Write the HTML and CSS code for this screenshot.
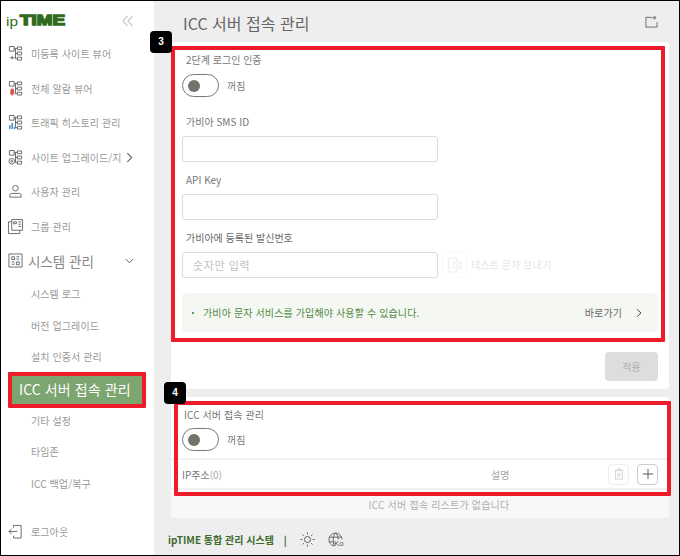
FILE: index.html
```html
<!DOCTYPE html>
<html lang="ko">
<head>
<meta charset="utf-8">
<title>ICC 서버 접속 관리</title>
<link rel="stylesheet" href="styles.css">
</head>
<body>
<div class="frame">
  <aside class="sidebar">
    <div class="logo-row">
      <svg class="logo" width="66" height="18" viewBox="0 0 66 18">
        <text class="logo-ip" x="5" y="15" textLength="12" lengthAdjust="spacingAndGlyphs">ip</text>
        <text class="logo-time" x="19" y="14" textLength="45" lengthAdjust="spacingAndGlyphs">TIME</text>
      </svg>
      <svg class="collapse" width="12" height="12" viewBox="0 0 12 12"><path d="M5.500 1 1 6l4.500 5M10.500 1 6 6l4.500 5"/></svg>
    </div>
    <nav class="nav">
      <a class="item">
        <svg class="ico" viewBox="0 0 16 16"><path d="M1.500.5h5v5h-5zM10 1h4.500v3H10zM10 6.500h4.500v3H10zM10 12h4.500v3H10zM6.500 2.500H10M8 2.500V13.500H10M8 8h2"/><path d="M2 12.500h5M4.500 10.500v4"/></svg>
        <span>미등록 사이트 뷰어</span>
      </a>
      <a class="item">
        <svg class="ico" viewBox="0 0 16 16"><path d="M1.500.5h5v5h-5zM10 1h4.500v3H10zM10 6.500h4.500v3H10zM10 12h4.500v3H10zM6.500 2.500H10M8 2.500V13.500H10M8 8h2"/><path class="alert" d="M2.500 13V10a2 2 0 0 1 4 0v3l1 1h-6zM3.500 14.500h2v1h-2z"/></svg>
        <span>전체 알람 뷰어</span>
      </a>
      <a class="item">
        <svg class="ico" viewBox="0 0 16 16"><path d="M1.500.5h5v5h-5zM10 1h4.500v3H10zM10 6.500h4.500v3H10zM10 12h4.500v3H10zM6.500 2.500H10M8 2.500V13.500H10M8 8h2"/><path class="bars" d="M2 11v4M4.500 8.500V15M7 12.500V15"/></svg>
        <span>트래픽 히스토리 관리</span>
      </a>
      <a class="item">
        <svg class="ico" viewBox="0 0 16 16"><path d="M1.500.5h5v5h-5zM10 1h4.500v3H10zM10 6.500h4.500v3H10zM10 12h4.500v3H10zM6.500 2.500H10M8 2.500V13.500H10M8 8h2"/><circle cx="4" cy="12" r="3"/><circle cx="4" cy="12" r="1"/></svg>
        <span class="long">사이트 업그레이드/지</span>
        <svg class="chev-r" viewBox="0 0 8 12"><path d="M1.500 1 6.500 6l-5 5"/></svg>
      </a>
      <a class="item">
        <svg class="ico" viewBox="0 0 16 16"><circle cx="8" cy="4.500" r="3"/><path d="M2 14v-2a2 2 0 0 1 2-2h8a2 2 0 0 1 2 2v2z"/></svg>
        <span>사용자 관리</span>
      </a>
      <a class="item">
        <svg class="ico" viewBox="0 0 16 16"><path d="M4 .5h11.500V12H4zM4 3H.5v12.500H12.500V12"/><path d="M6 3h3v2H6zM11 3h3M11 5.500h3M11 8h3"/></svg>
        <span>그룹 관리</span>
      </a>
      <a class="item group">
        <svg class="ico" viewBox="0 0 16 16"><path d="M1 1h14v14H1zM4 4h3v3H4zM9 4h3M9 6.500h3M4 9.500h3M4 12h3M9 9.500h3v3H9z"/></svg>
        <span>시스템 관리</span>
        <svg class="chev-d" viewBox="0 0 10 6"><path d="M1 1l4 4 4-4"/></svg>
      </a>
      <a class="sub">시스템 로그</a>
      <a class="sub">버전 업그레이드</a>
      <a class="sub">설치 인증서 관리</a>
      <a class="sub active">ICC 서버 접속 관리</a>
      <a class="sub">기타 설정</a>
      <a class="sub">타임존</a>
      <a class="sub">ICC 백업/복구</a>
    </nav>
    <a class="item logout">
      <svg class="ico" viewBox="0 0 16 16"><path d="M6 4V1.500h8V15H6v-2.500M10 8H1M4 5 1 8l3 3"/></svg>
      <span>로그아웃</span>
    </a>
  </aside>

  <main class="main">
    <header class="top">
      <h1>ICC 서버 접속 관리</h1>
      <svg class="share" viewBox="0 0 14 14"><path d="M7 2.500H1v10.500h12V7.500"/><path d="M7 3h4M9.500 1 12 3 9.500 5"/></svg>
    </header>

    <section class="card form-card">
      <label class="lbl">2단계 로그인 인증</label>
      <div class="switch-row">
        <span class="switch"><i></i></span>
        <span class="off">꺼짐</span>
      </div>
      <label class="lbl first">가비아 SMS ID</label>
      <div class="input"></div>
      <label class="lbl gap">API Key</label>
      <div class="input"></div>
      <label class="lbl gap dark">가비아에 등록된 발신번호</label>
      <div class="input-row">
        <div class="input ph">숫자만 입력</div>
        <span class="test-btn">
          <svg viewBox="0 0 16 18"><path d="M10 4V1H2v15h8v-3M7 5h8v7H7z"/><path d="M9 7.500h4M9 9.500h4"/></svg>
        </span>
        <span class="test-txt">테스트 문자 보내기</span>
      </div>
      <div class="notice">
        <span class="dot"></span>
        <span class="notice-txt">가비아 문자 서비스를 가입해야 사용할 수 있습니다.</span>
        <span class="go">바로가기</span>
        <svg class="chev-go" viewBox="0 0 8 12"><path d="M1.500 1 6.500 6l-5 5"/></svg>
      </div>
      <div class="actions"><span class="apply">적용</span></div>
    </section>

    <section class="card list-card">
      <div class="list-head">
        <div class="list-title">ICC 서버 접속 관리</div>
        <div class="switch-row tight">
          <span class="switch"><i></i></span>
          <span class="off">꺼짐</span>
        </div>
      </div>
      <div class="thead">
        <span class="th-ip">IP주소<em>(0)</em></span>
        <span class="th-desc">설명</span>
        <span class="sq faint">
          <svg viewBox="0 0 12 14"><path d="M1 3h10M4 3V1h4v2M2 3v10h8V3M5 5.500v5M7 5.500v5"/></svg>
        </span>
        <span class="sq">
          <svg viewBox="0 0 14 14"><path d="M7 1v12M1 7h12"/></svg>
        </span>
      </div>
      <div class="empty">ICC 서버 접속 리스트가 없습니다</div>
    </section>

    <footer class="foot">
      <strong>ipTIME 통합 관리 시스템</strong>
      <span class="bar">|</span>
      <svg class="sun" viewBox="0 0 16 16"><circle cx="8" cy="8" r="3.200"/><path d="M8 .5v2M8 13.500v2M.5 8h2M13.500 8h2M2.700 2.700l1.400 1.400M11.900 11.900l1.400 1.400M2.700 13.300l1.400-1.400M11.900 4.100l1.400-1.400"/></svg>
      <span class="globe">
        <svg viewBox="0 0 16 16"><path d="M6.500 15A7 7 0 1 1 15 8M1 5.500h13.500M1 10.500h4.500M8 1C5 4 5 11 6.800 15M8 1C10.500 3.500 11 6 11 8"/></svg>
        <b>Ko</b>
      </span>
    </footer>
  </main>

  <div class="mark mark-side"></div>
  <div class="mark mark-form"></div>
  <div class="mark mark-list"></div>
  <div class="badge badge-3">3</div>
  <div class="badge badge-4">4</div>
</div>
</body>
</html>
```
FILE: styles.css
```css
* { box-sizing: border-box; }
html, body { margin: 0; padding: 0; }
body { width: 680px; height: 556px; overflow: hidden; font-family: "Noto Sans CJK KR", "Noto Sans", sans-serif; color: #555; }

.frame { position: relative; width: 680px; height: 556px; border: 1px solid #000; display: flex; background: #eee; }

/* sidebar */
.sidebar { width: 153px; flex: none; background: #fff; display: flex; flex-direction: column; }
.logo-row { height: 36px; display: flex; align-items: center; justify-content: space-between; padding: 2px 20px 0 0; }
.logo-ip { font: 400 13px "Liberation Sans", sans-serif; fill: #2f6a1d; }
.logo-time { font: 700 14px "Liberation Sans", sans-serif; fill: #2f6a1d; stroke: #2f6a1d; stroke-width: 1.400; }
.collapse { margin-top: 1px; fill: none; stroke: #ccc; stroke-width: 1.300; }
.nav { display: flex; flex-direction: column; margin-top: -.5px; }
.item { height: 34.5px; display: flex; align-items: center; padding-left: 7px; font-size: 10px; letter-spacing: .1px; color: #999; white-space: nowrap; }
.ico { width: 15px; height: 15px; flex: none; margin-right: 8px; fill: none; stroke: #666; stroke-width: 1; overflow: visible; }
.ico .alert { fill: #d9534f; stroke: none; }
.ico .bars { stroke: #4a86c8; stroke-width: 1.600; }
.long { width: 90px; flex: none; }
.chev-r { width: 7px; height: 11px; margin-left: 5px; fill: none; stroke: #666; stroke-width: 1.300; }
.group { font-size: 13.500px; letter-spacing: 0; color: #888; }
.group .ico { margin-right: 5px; }
.chev-d { width: 9px; height: 6px; margin-left: 31px; fill: none; stroke: #555; stroke-width: 1.100; }
.sub { height: 31.6px; display: flex; align-items: center; padding-left: 30px; font-size: 10px; letter-spacing: .1px; color: #999; white-space: nowrap; }
.sub.active { margin-left: 11px; padding-left: 7px; width: 132px; background: #7ca56f; color: #fff; font-size: 14px; letter-spacing: .1px; }
.logout { margin-top: auto; margin-bottom: 6px; }

/* main */
.main { flex: 1; min-width: 0; padding: 0 10px 0 17px; display: flex; flex-direction: column; }
.top { height: 41px; flex: none; display: flex; align-items: center; justify-content: space-between; padding: 3px 11px 0 12px; }
.top h1 { margin: 0; font-size: 16px; font-weight: 400; color: #666; letter-spacing: 0; }
.share { width: 13px; height: 13px; margin-bottom: 4px; fill: none; stroke: #666; stroke-width: 1; }
.card { background: #fff; border-radius: 4px; flex: none; }
.form-card { height: 347px; padding: 10px 11px 0; display: flex; flex-direction: column; }
.lbl { height: 16px; line-height: 16px; padding-left: 4px; font-size: 10px; color: #777; flex: none; }
.lbl.first { margin-top: 17px; }
.lbl.gap { margin-top: 10px; }
.lbl.dark { color: #666; }
.switch-row { margin-top: 6px; height: 23px; display: flex; align-items: center; }
.switch { width: 37px; height: 23px; border: 1.500px solid #777b70; border-radius: 12px; display: flex; align-items: center; padding-left: 5px; }
.switch i { display: block; width: 12px; height: 12px; border-radius: 50%; background: #70746a; }
.off { margin-left: 8px; font-size: 10px; color: #777; }
.input { width: 256px; height: 26px; margin-top: 6px; border: 1px solid #dcdcdc; border-radius: 3px; flex: none; background: #fff; }
.input-row { display: flex; align-items: flex-end; flex: none; }
.ph { padding-left: 10px; font-size: 11px; line-height: 24px; color: #c0c0c0; letter-spacing: .6px; }
.test-btn { width: 25px; height: 26px; margin-left: 4px; border: 1px solid #f9f9f9; border-radius: 4px; display: flex; align-items: center; justify-content: center; }
.test-btn svg { width: 15px; height: 17px; fill: none; stroke: #eaeaea; stroke-width: 1; }
.test-txt { margin-left: 4px; font-size: 10px; line-height: 26px; color: #e6e6e6; letter-spacing: .1px; }
.notice { margin-top: 15px; height: 39px; background: #f5f7f2; border-radius: 4px; display: flex; align-items: center; padding: 0 16px 0 10px; flex: none; }
.dot { width: 2px; height: 2px; border-radius: 50%; background: #3e7a33; flex: none; }
.notice-txt { margin-left: 9px; font-size: 10px; letter-spacing: .13px; color: #4f8a45; }
.go { margin-left: auto; font-size: 10px; color: #666; letter-spacing: .1px; }
.chev-go { width: 6px; height: 10px; margin-left: 14px; fill: none; stroke: #444; stroke-width: 1.300; }
.actions { display: flex; justify-content: flex-end; margin-top: 20px; }
.apply { width: 53px; height: 29px; border-radius: 4px; background: #ddd; color: #b0b0b0; font-size: 10px; display: flex; align-items: center; justify-content: center; }

.list-card { margin-top: 8px; height: 121px; display: flex; flex-direction: column; background: #f8f8f8; overflow: hidden; }
.list-head { background: #fff; height: 61px; flex: none; padding: 10px 11px 0; }
.list-title { height: 16px; line-height: 16px; padding-left: 2px; font-size: 10px; letter-spacing: .1px; color: #777; }
.switch-row.tight { margin-top: 5px; }
.thead { background: #fff; height: 32px; border-top: 2px solid #f3f3f3; border-bottom: 2px solid #f1f1f1; flex: none; display: flex; align-items: center; padding: 0 11px; }
.th-ip { font-size: 10px; color: #777; width: 309px; }
.th-ip em { font-style: normal; color: #aaa; }
.th-desc { font-size: 10px; color: #a5a5a5; width: 117px; }
.sq { width: 21px; height: 21px; border: 1px solid #ccc; border-radius: 4px; display: flex; align-items: center; justify-content: center; margin-left: 8px; }
.sq svg { width: 12px; height: 12px; fill: none; stroke: #444; stroke-width: 1; }
.sq.faint { border-color: #eee; margin-left: 0; }
.sq.faint svg { stroke: #ccc; }
.empty { flex: 1; display: flex; align-items: center; justify-content: center; padding-left: 38px; font-size: 10px; letter-spacing: .2px; color: #b0b0b0; }

.foot { flex: 1; display: flex; align-items: center; padding-top: 6px; margin-left: -3px; }
.foot strong { font-size: 10px; font-weight: 700; color: #3d6b2c; }
.bar { margin-left: 10px; font-size: 10px; font-weight: 700; color: #3d6b2c; }
.sun { width: 15px; height: 15px; margin-left: 13px; fill: none; stroke: #555; stroke-width: 1; }
.globe { position: relative; width: 16px; height: 16px; margin-left: 13px; }
.globe svg { width: 15px; height: 15px; fill: none; stroke: #555; stroke-width: .9; display: block; }
.globe b { position: absolute; right: 0; bottom: 0; font: 400 8px/8px "Liberation Sans", sans-serif; color: #555; }

/* annotations over the screenshot */
.mark { position: absolute; border: 4px solid #ee1c2b; border-radius: 1px; pointer-events: none; }
.mark-side { left: 7px; top: 371px; width: 138px; height: 36px; }
.mark-form { left: 170px; top: 45px; width: 494px; height: 296px; }
.mark-list { left: 173px; top: 400px; width: 497px; height: 95px; }
.badge { position: absolute; width: 22px; height: 22px; background: #000; color: #fff; border-radius: 4px; font: 700 10px/22px "Liberation Sans", sans-serif; text-align: center; }
.badge-3 { left: 149px; top: 30px; }
.badge-4 { left: 163px; top: 381px; }
```
